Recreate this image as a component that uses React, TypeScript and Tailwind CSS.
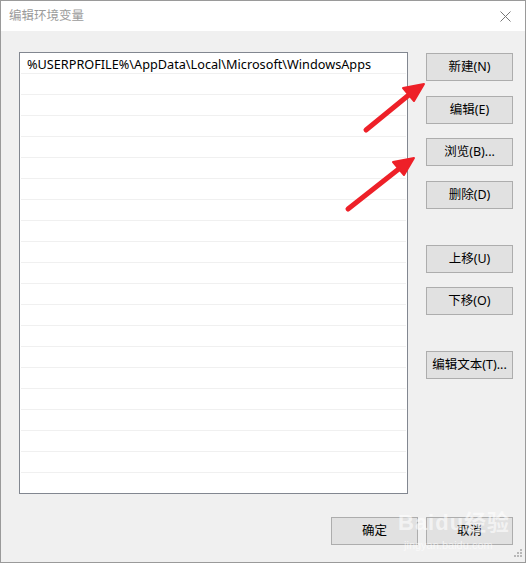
import React from "react"

const font = { fontFamily: '"Segoe UI", "Noto Sans", "Noto Sans CJK SC", sans-serif' }

function Btn({ label, className = "" }: { label: string; className?: string }) {
  return (
    <div
      className={`w-[87px] h-[28px] flex items-center justify-center bg-[#e1e1e1] border border-[#adadad] text-[12.5px] text-black ${className}`}
    >
      {label}
    </div>
  )
}

function Arrows() {
  return (
    <svg className="absolute inset-0 pointer-events-none" width="527" height="563">
      <g stroke="#ee2028" strokeWidth="5" strokeLinecap="round" fill="#ee2028">
        <line x1="366" y1="130" x2="410" y2="94" />
        <polygon points="424,84 403,88 414,101" strokeWidth="2" strokeLinejoin="round" />
        <line x1="348" y1="209" x2="400" y2="168" />
        <polygon points="414,158 393,162 404,175" strokeWidth="2" strokeLinejoin="round" />
      </g>
    </svg>
  )
}

export default function App() {
  const rows = [...Array(21)]
  return (
    <div className="relative w-[527px] h-[563px] bg-white" style={font}>
      <div className="w-[526px] h-[563px] border border-[#9a9a9a] flex flex-col bg-[#f0f0f0]">
        <div className="h-[30px] bg-white flex items-center justify-between pl-[8px] pr-[14px] shrink-0">
          <span className="text-[12.5px] text-[#9b9b9b]">编辑环境变量</span>
          <svg width="11" height="11" viewBox="0 0 11 11">
            <path d="M0.5 0.5 L10.5 10.5 M10.5 0.5 L0.5 10.5" stroke="#777" strokeWidth="1" />
          </svg>
        </div>
        <div className="flex pl-[18px] pt-[21px]">
          <div className="w-[389px] h-[442px] border border-[#828790] bg-white px-[1px] overflow-hidden">
            {rows.map((_, i) => (
              <div
                key={i}
                className={`h-[21px] flex items-center pl-[6px] pt-[3px] text-[12.7px] text-black ${i < 20 ? "border-b border-[#f0f0f0]" : ""}`}
              >
                {i === 0 ? "%USERPROFILE%\\AppData\\Local\\Microsoft\\WindowsApps" : ""}
              </div>
            ))}
          </div>
          <div className="flex flex-col ml-[18px] pt-[1px]">
            <Btn label="新建(N)" />
            <Btn label="编辑(E)" className="mt-[15px]" />
            <Btn label="浏览(B)..." className="mt-[14px]" />
            <Btn label="删除(D)" className="mt-[15px]" />
            <Btn label="上移(U)" className="mt-[36px]" />
            <Btn label="下移(O)" className="mt-[14px]" />
            <Btn label="编辑文本(T)..." className="mt-[36px]" />
          </div>
        </div>
        <div className="flex justify-end gap-[8px] pr-[12px] mt-[23px]">
          <Btn label="确定" />
          <Btn label="取消" />
        </div>
        <div className="flex justify-end pr-[2px] mt-[4px]">
          <svg width="9" height="9" viewBox="0 0 9 9">
            <g fill="#b8b8b8">
              <rect x="6" y="0" width="2" height="2" />
              <rect x="3" y="3" width="2" height="2" />
              <rect x="6" y="3" width="2" height="2" />
              <rect x="0" y="6" width="2" height="2" />
              <rect x="3" y="6" width="2" height="2" />
              <rect x="6" y="6" width="2" height="2" />
            </g>
          </svg>
        </div>
      </div>
      <Arrows />
      <div
        className="absolute left-[398px] top-[512px] pointer-events-none text-white/60 text-[22px] font-bold leading-none tracking-[1px]"
        style={{ fontFamily: '"Liberation Sans", "Noto Sans CJK SC", sans-serif' }}
      >
        Baidu经验
      </div>
      <div
        className="absolute left-[404px] top-[540px] pointer-events-none text-white/60 text-[11px] leading-none"
        style={{ fontFamily: '"Liberation Sans", sans-serif' }}
      >
        jingyan.baidu.com
      </div>
    </div>
  )
}
